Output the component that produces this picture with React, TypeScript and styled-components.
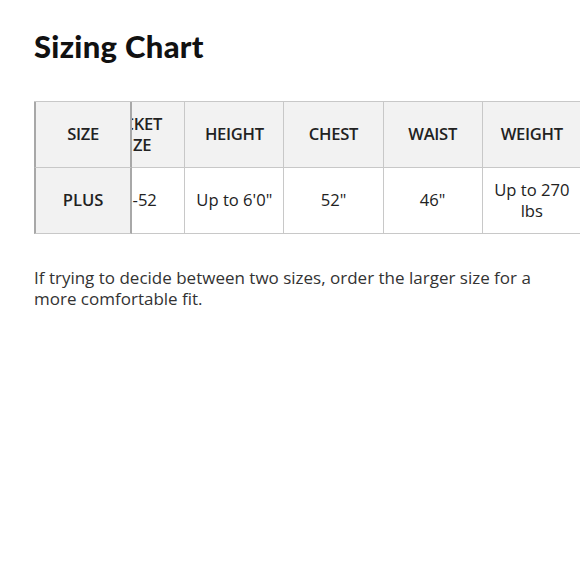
import React, { useLayoutEffect, useRef } from "react";
import styled, { createGlobalStyle } from "styled-components";

const Global = createGlobalStyle`
  html, body { margin: 0; padding: 0; background: #fff; }
  body { font-family: "Open Sans", "Liberation Sans", sans-serif; color: #222; }
`;

const Page = styled.div`
  padding: 28px 0 0 34px;
`;

const Title = styled.h1`
  margin: 0 0 37px 0;
  font-family: "Lato", "DejaVu Sans", sans-serif;
  font-weight: 900;
  font-size: 31px;
  line-height: 36px;
  color: #111;
  letter-spacing: 0.3px;
`;

const Scroller = styled.div`
  overflow-x: auto;
  scrollbar-width: none;
  &::-webkit-scrollbar { display: none; }
`;

const Table = styled.table`
  border-collapse: separate;
  border-spacing: 0;
  table-layout: fixed;
  width: 693px;
  border-top: 1px solid #c8c8c8;
`;

const Cell = styled.td<{ $head?: boolean; $sticky?: boolean }>`
  width: 99px;
  box-sizing: border-box;
  padding: 10px 10px 12px;
  text-align: center;
  vertical-align: middle;
  font-size: 16.6px;
  line-height: 21px;
  height: 66px;
  color: #222;
  font-weight: ${(p) => (p.$head || p.$sticky ? 600 : 400)};
  background: ${(p) => (p.$head || p.$sticky ? "#f2f2f2" : "#fff")};
  border-bottom: 1px solid #c8c8c8;
  border-right: 1px solid #c8c8c8;
  ${(p) =>
    p.$sticky
      ? `position: sticky; left: 0; z-index: 1;
         border-left: 2px solid #a8a8a8;
         border-right: 2px solid #a8a8a8;
         width: 98px;`
      : ""}
  ${(p) => (p.$head ? "letter-spacing: -0.3px;" : "")}
`;

const Note = styled.p`
  margin: 33px 30px 0 0;
  font-size: 17px;
  line-height: 21px;
  color: #333;
`;

const headers = ["SIZE", "JACKET SIZE", "HEIGHT", "CHEST", "WAIST", "WEIGHT", "INSEAM"];
const row = ["PLUS", "48-52", "Up to 6'0\"", "52\"", "46\"", "Up to 270 lbs", "32\""];

export default function App() {
  const ref = useRef<HTMLDivElement>(null);
  useLayoutEffect(() => {
    if (ref.current) ref.current.scrollLeft = 46;
  }, []);
  return (
    <Page>
      <Global />
      <Title>Sizing Chart</Title>
      <Scroller ref={ref}>
        <Table>
          <thead>
            <tr>
              {headers.map((h, i) => (
                <Cell as="th" key={h} $head $sticky={i === 0}>
                  {h}
                </Cell>
              ))}
            </tr>
          </thead>
          <tbody>
            <tr>
              {row.map((c, i) => (
                <Cell key={i} $sticky={i === 0}>
                  {c}
                </Cell>
              ))}
            </tr>
          </tbody>
        </Table>
      </Scroller>
      <Note>
        If trying to decide between two sizes, order the larger size for a more comfortable fit.
      </Note>
    </Page>
  );
}
